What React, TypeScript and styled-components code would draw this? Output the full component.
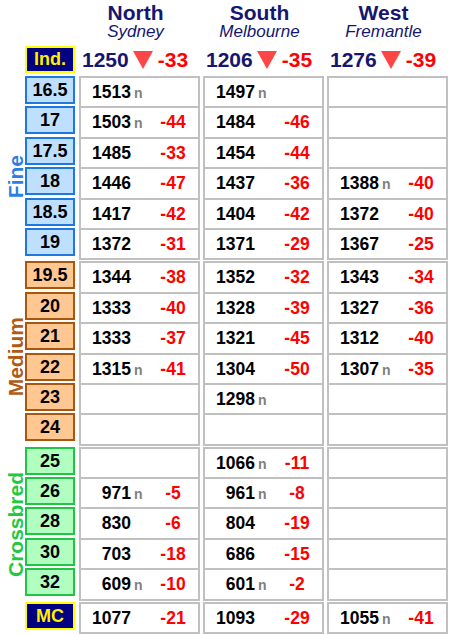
import React from 'react';
import styled, { createGlobalStyle, css } from 'styled-components';

const Global = createGlobalStyle`
  html, body { margin: 0; padding: 0; background: #fff; }
  body { font-family: "Liberation Sans", Arial, Helvetica, sans-serif; }
`;

type Cell = { v: number; d?: number; n?: boolean } | null;
const c = (v: number, d?: number): Cell => ({ v, d });
const N = (v: number, d?: number): Cell => ({ v, d, n: true });

type Kind = 'fine' | 'medium' | 'cross' | 'index';

interface Section {
  name?: string;
  kind: Kind;
  shift: number;
  rows: [string, Cell, Cell, Cell][];
}

const sections: Section[] = [
  {
    name: 'Fine',
    kind: 'fine',
    shift: 8,
    rows: [
      ['16.5', N(1513), N(1497), null],
      ['17', N(1503, -44), c(1484, -46), null],
      ['17.5', c(1485, -33), c(1454, -44), null],
      ['18', c(1446, -47), c(1437, -36), N(1388, -40)],
      ['18.5', c(1417, -42), c(1404, -42), c(1372, -40)],
      ['19', c(1372, -31), c(1371, -29), c(1367, -25)],
    ],
  },
  {
    name: 'Medium',
    kind: 'medium',
    shift: 3,
    rows: [
      ['19.5', c(1344, -38), c(1352, -32), c(1343, -34)],
      ['20', c(1333, -40), c(1328, -39), c(1327, -36)],
      ['21', c(1333, -37), c(1321, -45), c(1312, -40)],
      ['22', N(1315, -41), c(1304, -50), N(1307, -35)],
      ['23', null, N(1298), null],
      ['24', null, null, null],
    ],
  },
  {
    name: 'Crossbred',
    kind: 'cross',
    shift: 1,
    rows: [
      ['25', null, N(1066, -11), null],
      ['26', N(971, -5), N(961, -8), null],
      ['28', c(830, -6), c(804, -19), null],
      ['30', c(703, -18), c(686, -15), null],
      ['32', N(609, -10), N(601, -2), null],
    ],
  },
  {
    kind: 'index',
    shift: 0,
    rows: [['MC', c(1077, -21), c(1093, -29), N(1055, -41)]],
  },
];

const headers = [
  { city: 'North', port: 'Sydney', idx: 1250, d: -33 },
  { city: 'South', port: 'Melbourne', idx: 1206, d: -35 },
  { city: 'West', port: 'Fremantle', idx: 1276, d: -39 },
];

const palette: Record<Kind, { fill: string; border: string; text: string; label: string }> = {
  fine: { fill: '#bfdfff', border: '#1f78e0', text: '#000', label: '#2a7fe0' },
  medium: { fill: '#ffc893', border: '#a9560f', text: '#000', label: '#b05a12' },
  cross: { fill: '#b0ffc0', border: '#22c443', text: '#000', label: '#22c840' },
  index: { fill: '#000080', border: '#ffff00', text: '#ffee00', label: '#000' },
};

const NAVY = '#161670';
const GREY = '#c0c0c0';
const ROW = 28.4;

const Page = styled.div`
  width: 456px;
  height: 635px;
  overflow: hidden;
  display: flex;
  flex-direction: column;
`;

const Line = styled.div<{ $top?: number }>`
  display: flex;
  align-items: flex-start;
  margin-top: ${(p) => p.$top ?? 0}px;
`;

const Spacer = styled.div<{ $w: number }>`
  width: ${(p) => p.$w}px;
  flex: none;
`;

const Columns = styled.div`
  display: flex;
  gap: 3px;
  margin-left: 4px;
`;

const HeaderCell = styled.div`
  width: 121px;
  height: 46px;
  padding-top: 2px;
  padding-right: 8px;
  box-sizing: border-box;
  text-align: center;
  color: ${NAVY};
`;

const City = styled.div`
  font-size: 21px;
  font-weight: bold;
  line-height: 21px;
`;

const Port = styled.div`
  font-size: 17px;
  font-style: italic;
  line-height: 17px;
`;

const SideLabel = styled.div<{ $color: string; $shift: number }>`
  width: 25px;
  flex: none;
  align-self: stretch;
  box-sizing: border-box;
  padding-left: 5px;
  padding-top: ${(p) => p.$shift * 2}px;
  display: flex;
  align-items: center;
  color: ${(p) => p.$color};
  font-size: 21px;
  font-weight: bold;
  line-height: 21px;
  span {
    writing-mode: vertical-rl;
    transform: rotate(180deg);
    white-space: nowrap;
  }
`;

const BadgeCol = styled.div`
  width: 50px;
  flex: none;
  display: flex;
  flex-direction: column;
`;

const Badge = styled.div<{ $kind: Kind }>`
  width: 50px;
  height: 28px;
  margin-bottom: ${ROW + 2 - 28}px;
  box-sizing: border-box;
  border: 2px solid ${(p) => palette[p.$kind].border};
  background: ${(p) => palette[p.$kind].fill};
  color: ${(p) => palette[p.$kind].text};
  font-size: 18px;
  font-weight: bold;
  line-height: 24px;
  text-align: center;
  ${(p) =>
    p.$kind === 'index' &&
    css`
      line-height: 25px;
    `}
`;

const IndBadge = styled(Badge)`
  height: 27px;
  margin-bottom: 0;
  line-height: 23px;
`;

const Box = styled.div`
  width: 121px;
  box-sizing: border-box;
  border: 2px solid ${GREY};
`;

const Row = styled.div<{ $first: boolean }>`
  height: ${(p) => (p.$first ? ROW : ROW + 2)}px;
  box-sizing: border-box;
  border-top: ${(p) => (p.$first ? 'none' : `2px solid ${GREY}`)};
  display: flex;
  align-items: baseline;
  line-height: ${ROW}px;
  font-weight: bold;
  font-size: 17.5px;
  white-space: nowrap;
`;

const Num = styled.span`
  width: 50px;
  flex: none;
  text-align: right;
  color: #000;
`;

const Nflag = styled.span`
  width: 17px;
  flex: none;
  box-sizing: border-box;
  padding-left: 3px;
  font-size: 14px;
  line-height: 1;
  color: #808080;
`;

const Delta = styled.span`
  flex: 1;
  text-align: center;
  color: #ff0000;
`;

const IndexCell = styled.div`
  width: 121px;
  height: 27px;
  box-sizing: border-box;
  padding-left: 3px;
  display: flex;
  align-items: baseline;
  line-height: 27px;
  font-size: 21px;
  font-weight: bold;
  white-space: nowrap;
`;

const IndexNum = styled.span`
  color: ${NAVY};
`;

const IndexDelta = styled.span`
  color: #ff0000;
  margin-left: 5px;
`;

const Arrow = styled.svg`
  width: 20px;
  height: 18px;
  margin-left: 4px;
  align-self: flex-end;
  margin-bottom: 4px;
`;

const DownArrow = () => (
  <Arrow viewBox="0 0 20 18">
    <polygon points="0,0 20,0 10,18" fill="#ff4646" />
  </Arrow>
);

const DataRow: React.FC<{ cell: Cell; first: boolean }> = ({ cell, first }) => (
  <Row $first={first}>
    <Num>{cell ? cell.v : '\u00a0'}</Num>
    <Nflag>{cell && cell.n ? 'n' : ''}</Nflag>
    <Delta>{cell && cell.d !== undefined ? cell.d : ''}</Delta>
  </Row>
);

export default function App() {
  return (
    <Page>
      <Global />
      <Line>
        <Spacer $w={75} />
        <Columns>
          {headers.map((h) => (
            <HeaderCell key={h.city}>
              <City>{h.city}</City>
              <Port>{h.port}</Port>
            </HeaderCell>
          ))}
        </Columns>
      </Line>
      <Line>
        <Spacer $w={25} />
        <BadgeCol>
          <IndBadge $kind="index">Ind.</IndBadge>
        </BadgeCol>
        <Columns>
          {headers.map((h) => (
            <IndexCell key={h.city}>
              <IndexNum>{h.idx}</IndexNum>
              <DownArrow />
              <IndexDelta>{h.d}</IndexDelta>
            </IndexCell>
          ))}
        </Columns>
      </Line>
      {sections.map((s, si) => (
        <Line key={si} $top={si === 0 ? 3 : 1}>
          <SideLabel $color={palette[s.kind].label} $shift={s.shift}>
            {s.name && <span>{s.name}</span>}
          </SideLabel>
          <BadgeCol>
            {s.rows.map((r) => (
              <Badge key={r[0]} $kind={s.kind}>
                {r[0]}
              </Badge>
            ))}
          </BadgeCol>
          <Columns>
            {[1, 2, 3].map((ci) => (
              <Box key={ci}>
                {s.rows.map((r, ri) => (
                  <DataRow key={ri} cell={r[ci] as Cell} first={ri === 0} />
                ))}
              </Box>
            ))}
          </Columns>
        </Line>
      ))}
    </Page>
  );
}
